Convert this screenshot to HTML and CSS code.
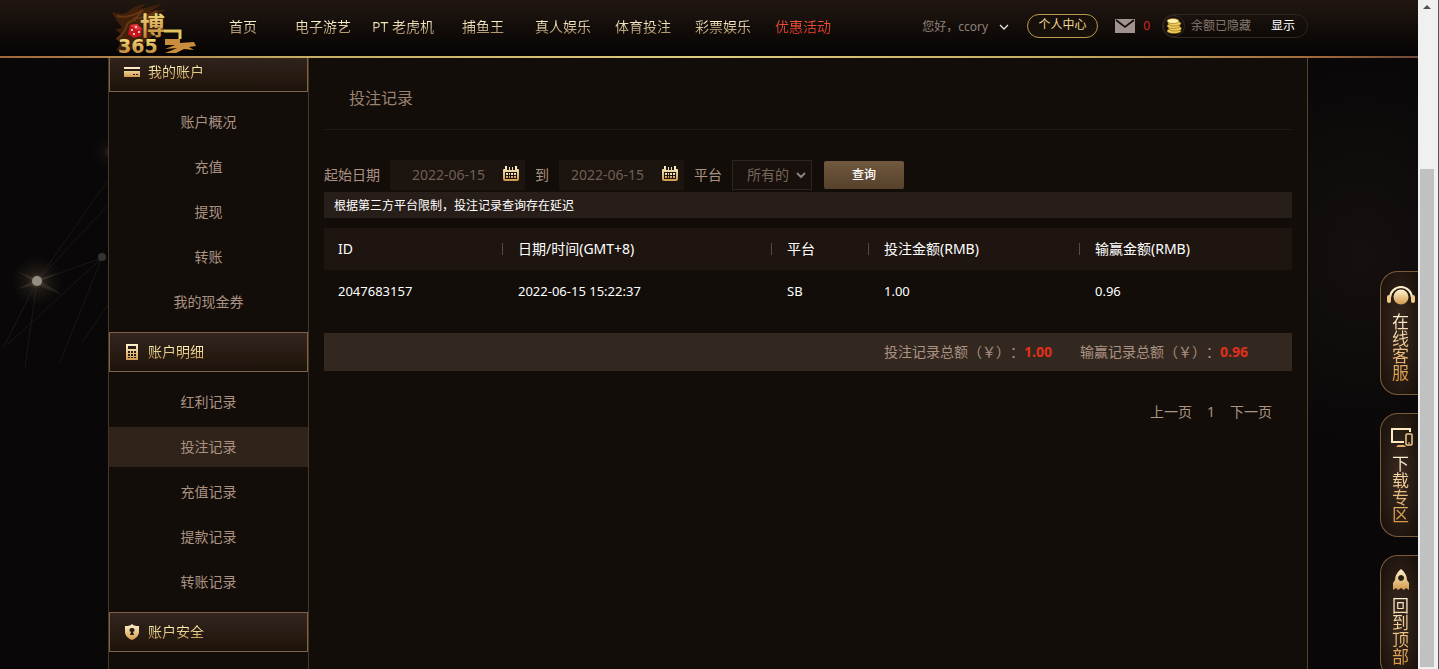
FILE: index.html
```html
<!DOCTYPE html>
<html lang="zh-CN">

<head>
  <meta charset="UTF-8">
  <meta name="viewport" content="width=device-width, initial-scale=1.0">
  <title>投注记录</title>
  <link rel="stylesheet" href="styles.css">
</head>

<body>
  <!-- 图标公用渐变 -->
  <svg class="defs" width="0" height="0" aria-hidden="true">
    <linearGradient id="gold" x1="0" y1="0" x2="0" y2="1">
      <stop offset="0" stop-color="#fff3cf" />
      <stop offset="1" stop-color="#d19a4c" />
    </linearGradient>
    <linearGradient id="logoGold" x1="0" y1="0" x2="0" y2="1">
      <stop offset="0" stop-color="#fff08a" />
      <stop offset="1" stop-color="#b9762c" />
    </linearGradient>
    <radialGradient id="glow">
      <stop offset="0" stop-color="#8a7a66" stop-opacity=".7" />
      <stop offset=".3" stop-color="#5a4c3c" stop-opacity=".3" />
      <stop offset="1" stop-color="#3a2c1c" stop-opacity="0" />
    </radialGradient>
  </svg>

  <div class="window">
    <div class="view">
      <!-- 背景星线 -->
      <svg class="stars" viewBox="0 0 108 340" width="108" height="340" aria-hidden="true">
        <g stroke="#1a1715" fill="none">
          <path d="M37 221L108 120M37 221L108 145M37 221L102 198M37 221L3 288M37 221L25 308M102 198L8 284M102 198L60 302M108 245L82 282" />
        </g>
        <circle cx="108" cy="92" r="18" fill="url(#glow)" opacity=".35" />
        <circle cx="37" cy="221" r="26" fill="url(#glow)" />
        <path d="M17 211l20 8 22-6-18 8 22 14-26-10-20 4 16-8z" fill="#6b5f50" opacity=".25" />
        <circle cx="37" cy="221" r="5" fill="#968d82" />
        <circle cx="102" cy="197" r="4" fill="#35332f" />
      </svg>

      <!-- 顶部导航 -->
      <header class="header">
        <div class="container header-inner">
          <a class="logo" href="#home" aria-label="博马365">
            <svg viewBox="0 0 95 58" width="95" height="58">
              <path d="M4 12q8 3 14 1 8-8 20-9-4 4-8 5 14-2 24-6-6 6-12 8 10-2 18-1-10 2-14 6l4 14-14 14-18 8-10-2q4-4 4-8l-5-3q5-2 6-5l-6-5q5 0 7-2-6-6-10-15z" fill="#40200b" />
              <path d="M9 16q12 3 26-6-6 8-10 9 12-1 24-8-8 8-14 10M9 39q8-6 10-14M18 26q4-6 10-6" fill="none" stroke="#653712" stroke-width="2" />
              <path d="M22 25l7-1 5 5-1 7-7 2-6-4z" fill="#c4161c" />
              <path d="M22 25l7-1 5 5-6 1z" fill="#e8343a" />
              <circle cx="24" cy="30" r="1" fill="#fff" />
              <circle cx="28" cy="27" r="1" fill="#fff" />
              <circle cx="26" cy="34" r="1" fill="#fff" />
              <circle cx="31" cy="32" r="1" fill="#fff" />
              <text class="logo-name" x="32" y="35" fill="url(#logoGold)">博</text>
              <path d="M56 31h16v8" fill="none" stroke="#e2c45c" stroke-width="3" />
              <path d="M57 39h15v4l14-1 2 4-7 1 5 3-10-1-8 4H57q8-3 12-5l-12 1 10-4H57z" fill="#c98d3e" />
              <text class="logo-num" x="10" y="53" fill="url(#logoGold)">365</text>
            </svg>
          </a>
          <nav class="nav">
            <a href="#home">首页</a>
            <a href="#egame">电子游艺</a>
            <a href="#slot">PT 老虎机</a>
            <a href="#fish">捕鱼王</a>
            <a href="#live">真人娱乐</a>
            <a href="#sport">体育投注</a>
            <a href="#lottery">彩票娱乐</a>
            <a class="hot" href="#promo">优惠活动</a>
          </nav>
          <div class="user">
            <button class="hello" type="button">您好，ccory
              <svg viewBox="0 0 10 6" width="10" height="6"><path d="M1 1l4 4 4-4" fill="none" stroke="#e8e4e0" stroke-width="1.3" /></svg>
            </button>
            <a class="center-btn" href="#center"><span>个人中心</span></a>
            <a class="mail" href="#mail">
              <svg viewBox="0 0 20 14" width="20" height="14"><path fill="#a0938f" d="M0 0h20v14H0z" /><path d="M1 1l9 7 9-7" fill="none" stroke="#130d0a" stroke-width="1.6" /></svg>
              0
            </a>
            <div class="balance">
              <span class="coin">
                <svg viewBox="0 0 16 16" width="16" height="16">
                  <g fill="#f0ce58" stroke="#86611d" stroke-width=".6">
                    <ellipse cx="8" cy="13" rx="7" ry="2.5" />
                    <ellipse cx="9" cy="10.5" rx="6.5" ry="2.5" />
                    <ellipse cx="7.5" cy="8" rx="6.5" ry="2.5" />
                    <ellipse cx="8.5" cy="5.5" rx="6.5" ry="2.5" />
                    <ellipse cx="7" cy="3" rx="6" ry="2.5" fill="#fff3a8" />
                  </g>
                </svg>
              </span>
              <span>余额已隐藏</span>
              <button type="button">显示</button>
            </div>
          </div>
        </div>
      </header>

      <main class="container main">
        <!-- 侧边菜单 -->
        <aside class="sidebar">
          <h2>
            <svg viewBox="0 0 16 16" width="16" height="16"><path fill="url(#gold)" fill-rule="evenodd" d="M0 3h16v2H0zM0 7h16v6H0zM9 10v1h2v-1zM12 10v1h2v-1z" /></svg>
            <span>我的账户</span>
          </h2>
          <ul>
            <li><a href="#overview">账户概况</a></li>
            <li><a href="#deposit">充值</a></li>
            <li><a href="#withdraw">提现</a></li>
            <li><a href="#transfer">转账</a></li>
            <li><a href="#coupon">我的现金券</a></li>
          </ul>
          <h2>
            <svg viewBox="0 0 16 16" width="16" height="16"><path fill="url(#gold)" fill-rule="evenodd" d="M2 0h12v16H2zM4 2v3h8V2zM4 7v2h2V7zM7 7v2h2V7zM10 7v2h2V7zM4 10v2h2v-2zM7 10v2h2v-2zM10 10v2h2v-2zM4 13v1h2v-1zM7 13v1h2v-1zM10 13v1h2v-1z" /></svg>
            <span>账户明细</span>
          </h2>
          <ul>
            <li><a href="#bonus">红利记录</a></li>
            <li><a class="active" href="#bets">投注记录</a></li>
            <li><a href="#deposits">充值记录</a></li>
            <li><a href="#withdraws">提款记录</a></li>
            <li><a href="#transfers">转账记录</a></li>
          </ul>
          <h2>
            <svg viewBox="0 0 16 16" width="16" height="16"><path fill="url(#gold)" fill-rule="evenodd" d="M8 0c2 2 4 2 7 2v6c0 4-4 7-7 8-3-1-7-4-7-8V2c3 0 5 0 7-2zM8 4a2 2 0 0 0-1 4l-1 3h4L9 8a2 2 0 0 0-1-4z" /></svg>
            <span>账户安全</span>
          </h2>
        </aside>

        <!-- 投注记录 -->
        <section class="content">
          <h1>投注记录</h1>
          <form class="filter">
            <label for="dateFrom">起始日期</label>
            <div class="date">
              <input id="dateFrom" type="text" value="2022-06-15">
              <svg viewBox="0 0 18 16" width="18" height="16"><path fill="url(#gold)" fill-rule="evenodd" d="M3 0h2v4h2V1h1v3h2V1h1v3h2V0h2v3h1q1 0 1 1v9q0 2-2 2H3q-2 0-2-2V4q0-1 1-1h1zM3 6v7h12V6z" /><path fill="url(#gold)" d="M4 7h2v2H4zM7 7h1v2H7zM9 7h2v2H9zM12 7h2v2h-2zM4 10h2v2H4zM7 10h1v2H7zM9 10h2v2H9zM12 10h2v2h-2z" /></svg>
            </div>
            <label for="dateTo">到</label>
            <div class="date date-to">
              <input id="dateTo" type="text" value="2022-06-15">
              <svg viewBox="0 0 18 16" width="18" height="16"><path fill="url(#gold)" fill-rule="evenodd" d="M3 0h2v4h2V1h1v3h2V1h1v3h2V0h2v3h1q1 0 1 1v9q0 2-2 2H3q-2 0-2-2V4q0-1 1-1h1zM3 6v7h12V6z" /><path fill="url(#gold)" d="M4 7h2v2H4zM7 7h1v2H7zM9 7h2v2H9zM12 7h2v2h-2zM4 10h2v2H4zM7 10h1v2H7zM9 10h2v2H9zM12 10h2v2h-2z" /></svg>
            </div>
            <label for="platform">平台</label>
            <div class="select">
              <select id="platform">
                <option>所有的</option>
              </select>
              <svg viewBox="0 0 10 7" width="10" height="7"><path d="M1 1l4 4 4-4" fill="none" stroke="#8f8178" stroke-width="2" /></svg>
            </div>
            <button class="search" type="submit">查询</button>
          </form>
          <p class="tip">根据第三方平台限制，投注记录查询存在延迟</p>
          <table>
            <thead>
              <tr>
                <th class="col-id">ID</th>
                <th class="col-time">日期/时间(GMT+8)</th>
                <th class="col-plat">平台</th>
                <th class="col-bet">投注金额(RMB)</th>
                <th>输赢金额(RMB)</th>
              </tr>
            </thead>
            <tbody>
              <tr>
                <td>2047683157</td>
                <td>2022-06-15 15:22:37</td>
                <td>SB</td>
                <td>1.00</td>
                <td>0.96</td>
              </tr>
            </tbody>
          </table>
          <div class="total">
            <span>投注记录总额（￥）：<b>1.00</b></span>
            <span>输赢记录总额（￥）：<b>0.96</b></span>
          </div>
          <div class="pager">
            <a href="#prev">上一页</a>
            <a href="#1">1</a>
            <a href="#next">下一页</a>
          </div>
        </section>
      </main>

      <!-- 右侧悬浮按钮 -->
      <div class="float">
        <a href="#service">
          <svg viewBox="0 0 28 22" width="28" height="22"><path d="M3 13a11 11 0 0 1 22 0" fill="none" stroke="#fff0cd" stroke-width="2" /><circle cx="14" cy="12" r="7.5" fill="url(#gold)" /><rect x="0" y="10" width="4" height="8" rx="2" fill="#f0c987" /><rect x="24" y="10" width="4" height="8" rx="2" fill="#f0c987" /></svg>
          <span>在线客服</span>
        </a>
        <a href="#download">
          <svg viewBox="0 0 28 22" width="28" height="22"><path d="M23 5V2H5v13h12" fill="none" stroke="#ffeac2" stroke-width="2" /><path d="M11 18h6l2 2H9z" fill="#e4ae64" /><rect x="19" y="7" width="6" height="11" rx="1" fill="none" stroke="#f2cd8c" stroke-width="1.5" /><path d="M21 16h2" stroke="#f2cd8c" /></svg>
          <span>下载专区</span>
        </a>
        <a href="#top">
          <svg viewBox="0 0 28 22" width="28" height="22"><path fill="url(#gold)" fill-rule="evenodd" d="M14 0c4 3 6 7 6 11l2 3v7l-3-2-2 2-3-2-3 2-2-2-3 2v-7l2-3c0-4 2-8 6-11zM14 6a3 3 0 1 0 .1 0z" /></svg>
          <span>回到顶部</span>
        </a>
      </div>
    </div>

    <!-- 滚动条 -->
    <div class="scrollbar">
      <i class="arrow"></i>
      <i class="thumb"></i>
    </div>
  </div>
</body>

</html>
```
FILE: styles.css
```css
:root {
  --line: #7d6446;
  --text: #ab9283;
  --panel: #120d09;
}

* {
  box-sizing: border-box;
  margin: 0;
  padding: 0;
}

body {
  font-family: "Noto Sans", "Noto Sans CJK SC", sans-serif;
  font-size: 14px;
  line-height: 20px;
  text-spacing-trim: space-all;
  color: var(--text);
  background: #090708;
}

a {
  color: inherit;
  text-decoration: none;
}

button,
input,
select {
  font: inherit;
  color: inherit;
  border: none;
  background: none;
}

ul {
  list-style: none;
}

svg {
  flex: none;
  display: block;
}

.defs {
  position: absolute;
}

.window {
  display: flex;
  height: 100vh;
  overflow: hidden;
}

.view {
  flex: 1;
  position: relative;
  overflow: hidden;
  padding-right: 2px;
  background: radial-gradient(ellipse 160px 200px at 96% 38%, #15100e, transparent), #090708;
}

.stars {
  position: absolute;
  left: 0;
  top: 60px;
}

.container {
  width: 100%;
  max-width: 1200px;
  margin: 0 auto;
}

/* 顶部导航 */
.header {
  position: absolute;
  z-index: 2;
  left: 0;
  right: 0;
  top: 0;
  padding-right: 2px;
  background: linear-gradient(#211711, #050303);
  border-bottom: 2px solid;
  border-image: linear-gradient(90deg, #a0673a, #c3ab62 20%, #dccb80 50%, #c3ab62 75%, #a0673a 93%, #6c4a36) 1;
}

.header-inner {
  display: flex;
  height: 56px;
}

.logo-name {
  font: bold 25px "Noto Sans CJK SC", sans-serif;
}

.logo-num {
  font: bold 19px "DejaVu Sans", sans-serif;
}

.nav {
  display: flex;
  line-height: 54px;
}

.nav a {
  width: 80px;
  text-align: center;
  white-space: nowrap;
  color: transparent;
  background: linear-gradient(#fff3ce 38%, #8e6d42 68%);
  background-clip: text;
}

.nav .hot {
  background-image: linear-gradient(#f0543a 38%, #b92a1c 68%);
}

.user {
  display: flex;
  align-items: center;
  margin-left: auto;
  padding-bottom: 4px;
  font-size: 12px;
}

.hello {
  display: flex;
  align-items: center;
  gap: 11px;
  margin-right: 18px;
  padding-top: 2px;
  color: #8f817a;
}

.center-btn {
  width: 71px;
  height: 24px;
  margin-right: 17px;
  line-height: 20px;
  text-align: center;
  border: 1px solid #b99a4e;
  border-radius: 12px;
  background: #17100a;
}

.center-btn span {
  color: #efd894;
}

.mail {
  display: flex;
  align-items: center;
  gap: 8px;
  margin-right: 12px;
  color: #d3281f;
}

.balance {
  display: flex;
  align-items: center;
  width: 146px;
  height: 24px;
  padding-right: 12px;
  border: 1px solid #2d2621;
  border-radius: 12px;
  color: #85786f;
}

.balance button {
  margin-left: auto;
  color: #fff;
}

.coin {
  display: grid;
  place-items: center;
  width: 22px;
  height: 22px;
  margin-right: 6px;
  border: 1px solid #33291c;
  border-radius: 50%;
}

/* 主体 */
.main {
  display: flex;
  min-height: 100%;
  padding-top: 52px;
  background: var(--panel);
  border-right: 1px solid #554433;
}

.sidebar {
  width: 201px;
  border: solid #463727;
  border-width: 0 1px;
}

.sidebar h2 {
  display: flex;
  align-items: center;
  gap: 8px;
  height: 40px;
  padding-left: 14px;
  font-size: 14px;
  font-weight: normal;
  border: 1px solid var(--line);
  background: linear-gradient(#33251e, #1d1209);
}

.sidebar h2 span {
  color: transparent;
  background: linear-gradient(#fff0b0 30%, #c39a54 85%);
  background-clip: text;
}

.sidebar ul {
  display: grid;
  gap: 5px;
  padding: 10px 0;
}

.sidebar li a {
  display: block;
  line-height: 40px;
  text-align: center;
}

.sidebar .active {
  background: #30241a;
}

/* 内容区 */
.content {
  flex: 1;
  padding: 0 15px;
}

h1 {
  height: 78px;
  padding-left: 25px;
  font-size: 16px;
  font-weight: normal;
  line-height: 92px;
  color: #9a8272;
  border-bottom: 1px solid #211a15;
}

.filter {
  display: flex;
  align-items: center;
  margin-top: 30px;
}

.filter label {
  margin-right: 10px;
}

.date {
  display: flex;
  align-items: center;
  width: 135px;
  height: 30px;
  margin-right: 10px;
  padding-left: 22px;
  background: #1c140f;
}

.date-to {
  width: 125px;
  padding-left: 12px;
}

.date input {
  width: 90px;
  color: #6f5f54;
}

.date svg {
  margin-bottom: 2px;
}

.select {
  display: flex;
  align-items: center;
  position: relative;
  width: 80px;
  height: 30px;
  margin-right: 12px;
  border: 1px solid #2e2520;
  background: #17100c;
}

.select select {
  width: 100%;
  height: 100%;
  padding-left: 14px;
  color: #77665b;
  appearance: none;
}

.select svg {
  position: absolute;
  right: 5px;
}

.search {
  width: 80px;
  height: 28px;
  font-size: 12px;
  font-weight: 500;
  color: #fff;
  border-radius: 2px;
  background: linear-gradient(#71583f, #57412b);
}

.tip {
  margin: 2px 0 10px;
  padding: 4px 10px 2px;
  font-size: 12px;
  color: #fff;
  background: #281e19;
}

table {
  width: 100%;
  table-layout: fixed;
  border-collapse: collapse;
  color: #fff;
}

th,
td {
  height: 42px;
  padding-left: 14px;
  font-weight: normal;
  text-align: left;
}

td {
  font-size: 13px;
}

thead {
  background: #1e1510;
}

/* 列分隔线 */
th + th {
  background: linear-gradient(#5d4a3c, #5d4a3c) 0 50% / 1px 12px no-repeat;
}

th + th,
td + td {
  padding-left: 16px;
}

.col-id {
  width: 178px;
}

.col-time {
  width: 269px;
}

.col-plat {
  width: 97px;
}

.col-bet {
  width: 211px;
}

.total {
  display: flex;
  justify-content: flex-end;
  gap: 28px;
  margin-top: 21px;
  padding: 9px 44px;
  background: #33281f;
}

.total b {
  color: #e02f1d;
}

.pager {
  display: flex;
  justify-content: flex-end;
  gap: 15px;
  padding: 31px 20px;
}

/* 悬浮按钮 */
.float {
  position: absolute;
  z-index: 3;
  right: 0;
  top: 271px;
  display: grid;
  gap: 18px;
}

.float a {
  display: flex;
  flex-direction: column;
  align-items: center;
  gap: 6px;
  width: 38px;
  height: 124px;
  padding: 13px 0 0 2px;
  border: 1px solid #7b5b3c;
  border-right: none;
  border-radius: 18px 0 0 18px;
  background: radial-gradient(#3b2a20, #170f0a);
}

.float span {
  width: 17px;
  font-size: 17px;
  line-height: 17px;
  word-break: break-all;
  color: transparent;
  background: linear-gradient(#fff3d6, #d9983f);
  background-clip: text;
}

/* 滚动条 */
.scrollbar {
  display: flex;
  flex-direction: column;
  width: 21px;
  padding: 5px 4px 2px 2px;
  background: #f0f0f0;
  border-right: 1px solid #555;
}

.arrow {
  align-self: center;
  border: 4px solid transparent;
  border-top: none;
  border-bottom-color: #505050;
}

.thumb {
  flex: 1;
  margin-top: 160px;
  background: #c1c1c1;
}
```
